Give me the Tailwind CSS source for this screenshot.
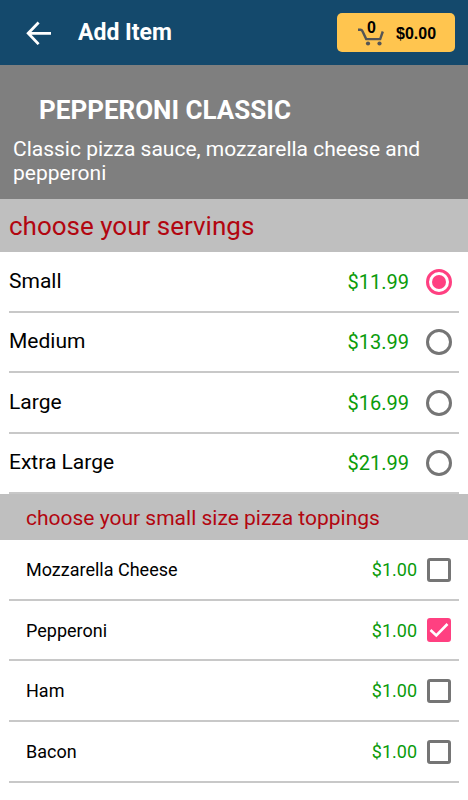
<!doctype html>
<html lang="en">
  <head>
    <title>Add Item</title>
    <meta charset="utf-8">
    <meta name="viewport" content="width=device-width, initial-scale=1">
    <script src="https://cdn.jsdelivr.net/npm/@tailwindcss/browser@4"></script>
  </head>
  <body class="bg-white font-['Roboto',sans-serif] text-black">
    <header class="flex h-[65px] items-center bg-[#14496c] pl-[26px] pr-[13px] text-white">
      <button type="button" aria-label="Back">
        <svg class="h-6 w-[26px]" viewBox="0 0 26 24" fill="none" stroke="currentColor" stroke-width="2.8">
          <path d="M25 12.3H3M12.6 1.5L2.2 12.3L12.6 23.1"/>
        </svg>
      </button>
      <h1 class="ml-[26px] pt-[2px] text-[23px] font-bold">Add Item</h1>
      <button type="button" class="ml-auto flex h-[39px] w-[118px] items-center rounded-[5px] bg-[#ffc54f] pl-[21px] font-['Liberation_Sans',sans-serif] font-bold text-black">
        <span class="relative">
          <svg class="mt-2 h-[18px] w-[26px]" viewBox="0 0 26 18" fill="none" stroke="#555" stroke-width="2.4">
            <path d="M0 1.7H2.5Q3.8 1.7 4.5 3.2L8.2 11.1H22.2L24.8 3.5"/>
            <circle cx="10" cy="15.5" r="2.1" fill="#555" stroke="none"/>
            <circle cx="21.5" cy="15.5" r="2.1" fill="#555" stroke="none"/>
          </svg>
          <span class="absolute left-[9px] top-0 text-base leading-4">0</span>
        </span>
        <span class="ml-3 pt-[2px] text-base">$0.00</span>
      </button>
    </header>
    <main>
      <section class="bg-[#7f7f7f] px-[13px] pb-[14px] pt-[28px] text-white">
        <h2 class="pl-[26px] text-[26px] font-bold leading-[34px]">PEPPERONI CLASSIC</h2>
        <p class="mt-[10px] text-[21px] leading-6">Classic pizza sauce, mozzarella cheese and pepperoni</p>
      </section>

      <fieldset>
        <legend class="h-[53px] w-full bg-[#bfbfbf] px-[9px] text-[26px] leading-[55px] text-[#b20610]">choose your servings</legend>
        <div class="px-[9px] text-[21px]">
          <label class="flex h-[61px] items-center border-b-2 border-[#c8c8c8] pr-[7px]">
            <span>Small</span>
            <span class="ml-auto text-[20px] text-[#0a9b0a]">$11.99</span>
            <input type="radio" name="serving" checked class="ml-[17px] grid size-[26px] appearance-none place-items-center rounded-full border-[3px] border-[#757575] before:size-[14px] before:rounded-full checked:border-[#ff4081] checked:before:bg-[#ff4081]">
          </label>
          <label class="flex h-[60px] items-center border-b-2 border-[#c8c8c8] pr-[7px]">
            <span>Medium</span>
            <span class="ml-auto text-[20px] text-[#0a9b0a]">$13.99</span>
            <input type="radio" name="serving" class="ml-[17px] grid size-[26px] appearance-none place-items-center rounded-full border-[3px] border-[#757575] before:size-[14px] before:rounded-full checked:border-[#ff4081] checked:before:bg-[#ff4081]">
          </label>
          <label class="flex h-[61px] items-center border-b-2 border-[#c8c8c8] pr-[7px]">
            <span>Large</span>
            <span class="ml-auto text-[20px] text-[#0a9b0a]">$16.99</span>
            <input type="radio" name="serving" class="ml-[17px] grid size-[26px] appearance-none place-items-center rounded-full border-[3px] border-[#757575] before:size-[14px] before:rounded-full checked:border-[#ff4081] checked:before:bg-[#ff4081]">
          </label>
          <label class="flex h-[60px] items-center border-b-2 border-[#c8c8c8] pr-[7px]">
            <span>Extra Large</span>
            <span class="ml-auto text-[20px] text-[#0a9b0a]">$21.99</span>
            <input type="radio" name="serving" class="ml-[17px] grid size-[26px] appearance-none place-items-center rounded-full border-[3px] border-[#757575] before:size-[14px] before:rounded-full checked:border-[#ff4081] checked:before:bg-[#ff4081]">
          </label>
        </div>
      </fieldset>

      <fieldset>
        <legend class="h-[46px] w-full bg-[#bfbfbf] px-[26px] text-[21px] leading-[48px] text-[#b20610]">choose your small size pizza toppings</legend>
        <div class="px-[9px] text-[18px]">
          <label class="flex h-[61px] items-center border-b-2 border-[#c8c8c8] pl-[17px] pr-2">
            <span>Mozzarella Cheese</span>
            <span class="ml-auto text-[#0a9b0a]">$1.00</span>
            <span class="ml-[10px] grid">
              <input type="checkbox" class="peer col-start-1 row-start-1 size-6 appearance-none rounded-[3px] border-[3px] border-[#757575] checked:border-[#ff4081] checked:bg-[#ff4081]">
              <svg class="pointer-events-none invisible col-start-1 row-start-1 size-6 peer-checked:visible" viewBox="0 0 24 24" fill="none" stroke="#fff" stroke-width="2.6"><path d="M3.5 12L9.3 17.5L20.5 6"/></svg>
            </span>
          </label>
          <label class="flex h-[60px] items-center border-b-2 border-[#c8c8c8] pl-[17px] pr-2">
            <span>Pepperoni</span>
            <span class="ml-auto text-[#0a9b0a]">$1.00</span>
            <span class="ml-[10px] grid">
              <input type="checkbox" checked class="peer col-start-1 row-start-1 size-6 appearance-none rounded-[3px] border-[3px] border-[#757575] checked:border-[#ff4081] checked:bg-[#ff4081]">
              <svg class="pointer-events-none invisible col-start-1 row-start-1 size-6 peer-checked:visible" viewBox="0 0 24 24" fill="none" stroke="#fff" stroke-width="2.6"><path d="M3.5 12L9.3 17.5L20.5 6"/></svg>
            </span>
          </label>
          <label class="flex h-[61px] items-center border-b-2 border-[#c8c8c8] pl-[17px] pr-2">
            <span>Ham</span>
            <span class="ml-auto text-[#0a9b0a]">$1.00</span>
            <span class="ml-[10px] grid">
              <input type="checkbox" class="peer col-start-1 row-start-1 size-6 appearance-none rounded-[3px] border-[3px] border-[#757575] checked:border-[#ff4081] checked:bg-[#ff4081]">
              <svg class="pointer-events-none invisible col-start-1 row-start-1 size-6 peer-checked:visible" viewBox="0 0 24 24" fill="none" stroke="#fff" stroke-width="2.6"><path d="M3.5 12L9.3 17.5L20.5 6"/></svg>
            </span>
          </label>
          <label class="flex h-[61px] items-center border-b-2 border-[#c8c8c8] pl-[17px] pr-2">
            <span>Bacon</span>
            <span class="ml-auto text-[#0a9b0a]">$1.00</span>
            <span class="ml-[10px] grid">
              <input type="checkbox" class="peer col-start-1 row-start-1 size-6 appearance-none rounded-[3px] border-[3px] border-[#757575] checked:border-[#ff4081] checked:bg-[#ff4081]">
              <svg class="pointer-events-none invisible col-start-1 row-start-1 size-6 peer-checked:visible" viewBox="0 0 24 24" fill="none" stroke="#fff" stroke-width="2.6"><path d="M3.5 12L9.3 17.5L20.5 6"/></svg>
            </span>
          </label>
        </div>
      </fieldset>
    </main>
  </body>
</html>
